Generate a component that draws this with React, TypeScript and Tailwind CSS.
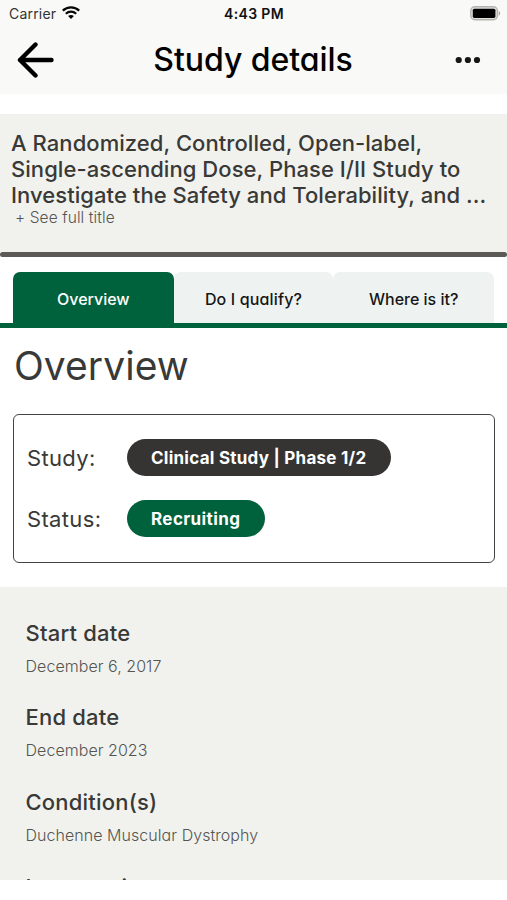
import React from "react";

// Single-storey "a" for the brand text
const brandClass = "font-['Inter','Liberation_Sans',sans-serif] [font-feature-settings:'cv11']";

const TABS = [
  { label: "Overview", className: "w-[161px] bg-[#00623c] text-white tracking-[0px]" },
  { label: "Do I qualify?", className: "w-[160px] bg-[#eef3f1] text-[#161616] tracking-[0.15px]" },
  { label: "Where is it?", className: "w-[161px] bg-[#eef3f1] text-[#161616] tracking-[0px]" },
];

const DETAILS = [
  { label: "Start date", value: "December 6, 2017" },
  { label: "End date", value: "December 2023" },
  { label: "Condition(s)", value: "Duchenne Muscular Dystrophy" },
  { label: "Intervention", value: "" },
];

function WifiIcon() {
  return (
    <svg width="18" height="14" viewBox="0 0 18 14" fill="none" stroke="#080808">
      <path d="M0.8 4.6C5.4 0.2 12.6 0.2 17.2 4.6" strokeWidth="2.3" />
      <path d="M3.8 7.7C6.8 4.9 11.2 4.9 14.2 7.7" strokeWidth="2.2" />
      <path d="M6.1 10C7.8 8.6 10.2 8.6 11.9 10L9 13Z" fill="#080808" stroke="none" />
    </svg>
  );
}

function BatteryIcon() {
  return (
    <svg width="31" height="15" viewBox="0 0 31 15">
      <rect x="0.8" y="0.8" width="26.6" height="13" rx="4" fill="#e0e0dd" stroke="#b5b4b0" strokeWidth="1.4" />
      <rect x="2.8" y="2.7" width="22.6" height="9.2" rx="1.6" fill="#000" />
      <path d="M28.7 5V9.8C30.7 8.9 30.7 5.9 28.7 5Z" fill="#aaa9a6" />
    </svg>
  );
}

function StatusBar() {
  return (
    <div className="grid h-[26px] grid-cols-[1fr_auto_1fr] items-center pl-[9px] pr-[6px] text-[14px]">
      <div className="flex items-center gap-[6px] text-[#333]">
        <span className="tracking-[0.2px]">Carrier</span>
        <WifiIcon />
      </div>
      <span className="-ml-[2px] font-semibold tracking-[0.35px] text-[#111]">4:43 PM</span>
      <div className="flex justify-end">
        <BatteryIcon />
      </div>
    </div>
  );
}

function NavBar() {
  return (
    <div className="flex h-[68px] items-center justify-between pl-[17px] pr-[26px]">
      <svg width="38" height="36" viewBox="0 0 38 36" fill="none" stroke="#000" strokeWidth="4.4" strokeLinecap="round" strokeLinejoin="round">
        <path d="M18.5 2.5L3 18L18.5 33.5M3 18H34.5" />
      </svg>
      <h1 className={`-ml-[4px] text-[32px] font-[550] leading-none tracking-[-0.05px] text-black ${brandClass}`}>
        Study details
      </h1>
      <svg width="26" height="8" viewBox="0 0 26 8" fill="#161616">
        <circle cx="3.7" cy="4" r="3.1" />
        <circle cx="12.9" cy="4" r="3.1" />
        <circle cx="22" cy="4" r="3.1" />
      </svg>
    </div>
  );
}

function Row({ label, pill, className }: { label: string; pill: string; className: string }) {
  return (
    <div className="flex h-[37px] items-center">
      <span className="w-[100px] pt-[2px] text-[22px] tracking-[0.35px]">{label}</span>
      <span className={`flex h-[37px] items-center rounded-full pl-[24px] pt-[2px] text-[17px] font-bold text-white ${className}`}>
        {pill}
      </span>
    </div>
  );
}

export default function App() {
  return (
    <div className="h-[900px] w-[507px] overflow-hidden whitespace-nowrap bg-white font-['Inter','Liberation_Sans',sans-serif] text-[#393937]">
      <header className="h-[94px] bg-[#f9f9f7]">
        <StatusBar />
        <NavBar />
      </header>

      {/* Study title */}
      <section className="mt-5 h-[138px] bg-[#f1f2ee] pl-[11px] pt-[17px]">
        <p className="text-[22px] font-[470] leading-[25.8px] tracking-[0.06px]">
          A Randomized, Controlled, Open-label,
          <br />
          Single-ascending Dose, Phase I/II Study to
          <br />
          Investigate the Safety and Tolerability, and ...
        </p>
        <p className={`pl-[4px] pt-px text-[15.5px] font-[350] leading-[18px] tracking-[0.1px] text-[#555552] ${brandClass}`}>
          + See full title
        </p>
      </section>
      <div className="h-[5px] rounded-full bg-[#5b5a56]" />

      {/* Tabs */}
      <nav className="mt-[15px] flex h-[56px] border-b-[5px] border-[#00623c] px-[13px]">
        {TABS.map((tab) => (
          <div
            key={tab.label}
            className={`flex items-center justify-center rounded-t-[7px] pt-[2px] text-[16px] font-[550] ${brandClass} ${tab.className}`}
          >
            {tab.label}
          </div>
        ))}
      </nav>

      <main>
        <h2 className="ml-[14px] mt-[18px] h-[40px] text-[39px] leading-[40px] tracking-[0.05px]">Overview</h2>
        <div className="mx-[13px] mt-[28px] flex h-[149px] w-[482px] flex-col gap-[24px] rounded-[6px] border-[1.5px] border-[#444342] pl-[13px] pt-[24px]">
          <Row label="Study:" pill="Clinical Study | Phase 1/2" className="w-[264px] bg-[#363433] tracking-[0.25px]" />
          <Row label="Status:" pill="Recruiting" className="w-[138px] bg-[#00623c] tracking-[0.4px]" />
        </div>

        <div className="mt-[24px] h-[293px] overflow-hidden bg-[#f1f2ee] pl-[25.5px] pt-[33px]">
          {DETAILS.map((item) => (
            <div key={item.label} className="h-[84.4px] last:pt-px">
              <div className="text-[22px] font-[470] leading-[27px] tracking-[0.2px]">{item.label}</div>
              <div className={`mt-[8px] text-[16px] font-[350] leading-[22px] tracking-[0.05px] text-[#555552] ${brandClass}`}>
                {item.value}
              </div>
            </div>
          ))}
        </div>
      </main>
    </div>
  );
}
